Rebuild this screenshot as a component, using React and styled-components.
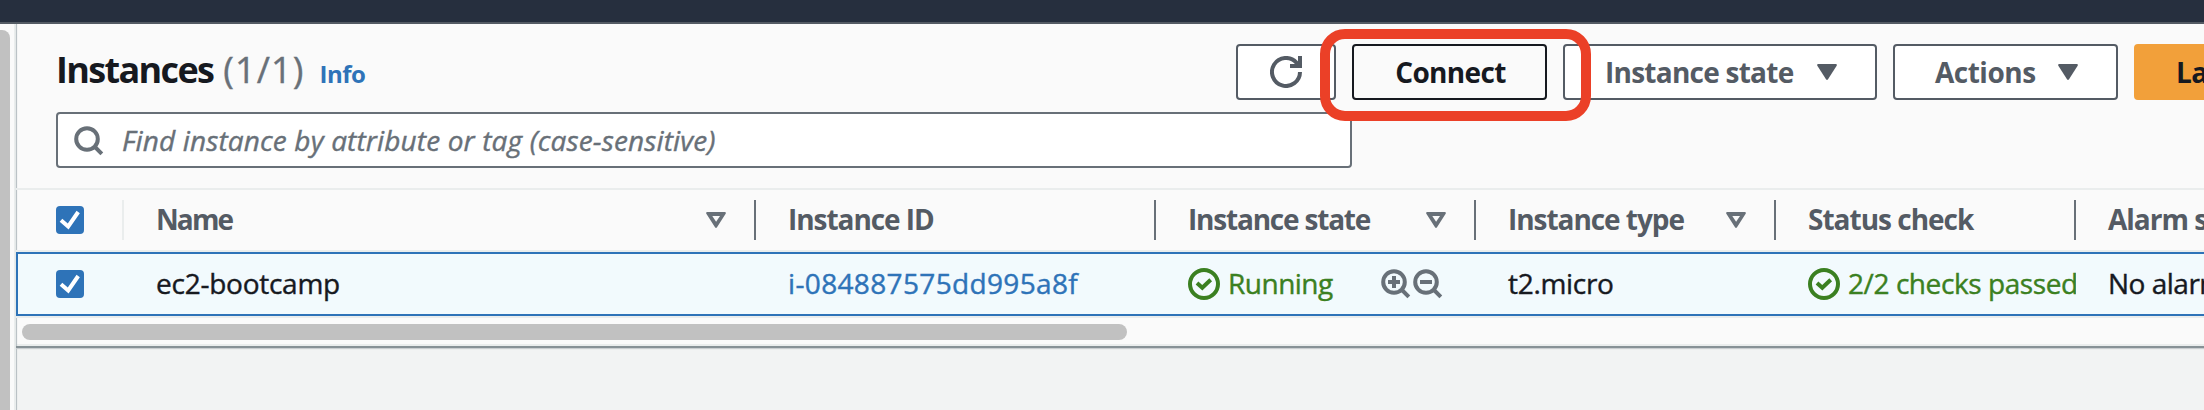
import React from "react";
import styled, { createGlobalStyle } from "styled-components";

const color = {
  ink: "#16191f",
  slate: "#545b64",
  muted: "#687078",
  link: "#2e73b8",
  ok: "#3b8021",
  line: "#eaeded",
  surface: "#fafafa",
};

const GlobalStyle = createGlobalStyle`
  *, *::before, *::after { box-sizing: border-box; }
  body {
    margin: 0;
    overflow: hidden;
    background: #f2f3f3;
    color: ${color.ink};
    font: 400 28px/36px "Open Sans", "Noto Sans", sans-serif;
  }
  svg { display: block; flex: none; }
`;

const Page = styled.div`
  display: flex;
  flex-direction: column;
  width: 2204px;
  height: 410px;
  overflow: hidden;
`;

const TopBar = styled.header`
  flex: none;
  height: 24px;
  background: #262f3e;
  border-bottom: 2px solid ${color.slate};
`;

const Body = styled.div`
  display: flex;
  flex: 1;
  min-height: 0;
`;

const Sidebar = styled.aside`
  flex: none;
  width: 16px;
  padding-top: 6px;
  background: ${color.surface};
  border-right: 2px solid ${color.line};
`;

const SidebarThumb = styled.div`
  width: 10px;
  height: 100%;
  border-radius: 0 8px 0 0;
  background: #c1c1c1;
`;

const Main = styled.main`
  flex: 1;
  min-width: 0;
  box-shadow: inset 2px 0 1px -1px #b4bcc0;
`;

const Panel = styled.section`
  position: relative;
  display: flex;
  flex-direction: column;
  height: 324px;
  background: ${color.surface};
  border-bottom: 2px solid #879196;
  box-shadow: 0 1px 1px #c9cdd0, inset 2px 0 1px -1px #b4bcc0, inset 0 -2px 0 ${color.line};
`;

const PanelHeader = styled.div`
  flex: none;
  display: flex;
  justify-content: space-between;
  height: 88px;
  padding: 20px 0 0 40px;
`;

const Heading = styled.h1`
  display: flex;
  align-items: baseline;
  margin: 0;
  font-size: 36px;
  line-height: 52px;
  font-weight: 700;
  letter-spacing: -1.65px;
`;

const Counter = styled.span`
  margin-left: 10px;
  font-weight: 400;
  letter-spacing: 1.1px;
  color: ${color.muted};
  -webkit-text-stroke: 0.4px currentColor;
`;

const InfoLink = styled.a`
  margin-left: 15px;
  font-size: 24px;
  letter-spacing: -0.5px;
  color: ${color.link};
`;

const Actions = styled.div`
  display: flex;
  gap: 16px;
  width: 968px;
  overflow: hidden;
`;

const Button = styled.button`
  flex: none;
  display: flex;
  align-items: center;
  justify-content: ${(p) => (p.$center ? "center" : "space-between")};
  width: ${(p) => p.$width}px;
  height: 56px;
  padding: 0 38px 0 40px;
  border: 2px solid ${(p) => (p.$hovered ? color.ink : color.slate)};
  border-radius: 4px;
  background: ${(p) => (p.$hovered ? color.surface : "#fff")};
  color: ${(p) => (p.$hovered ? color.ink : color.slate)};
  font: 700 28px/36px "Open Sans", "Noto Sans", sans-serif;
  letter-spacing: ${(p) => p.$tracking || -0.5}px;
  white-space: nowrap;
`;

const IconButton = styled(Button)`
  padding: 0;
`;

const PrimaryButton = styled(Button)`
  border-color: #f2a03a;
  background: #f2a03a;
  color: ${color.ink};
`;

const SearchRow = styled.div`
  flex: none;
  height: 76px;
  padding-left: 40px;
`;

const SearchField = styled.div`
  display: flex;
  align-items: center;
  gap: 17px;
  width: 1296px;
  height: 56px;
  padding: 2px 0 0 15px;
  border: 2px solid ${color.muted};
  border-radius: 4px;
  background: #fff;
  color: ${color.muted};
`;

const Placeholder = styled.span`
  margin-bottom: 2px;
  font-style: italic;
  letter-spacing: 0.14px;
  -webkit-text-stroke: 0.4px currentColor;
`;

const TableRow = styled.div`
  flex: none;
  display: grid;
  grid-template-columns: 108px 632px 400px 320px 300px 300px 300px;
  overflow: hidden;
`;

const HeaderRow = styled(TableRow)`
  height: 64px;
  padding-bottom: 2px;
  border-top: 2px solid ${color.line};
  border-bottom: 2px solid ${color.line};
`;

const BodyRow = styled(TableRow)`
  position: relative;
  height: 64px;
  border: 2px solid ${color.link};
  border-right: 0;
  background: #f2fafd;
  grid-template-columns: 106px 632px 400px 320px 300px 300px 300px;
`;

const HeaderCell = styled.div`
  display: flex;
  align-items: center;
  justify-content: space-between;
  height: 40px;
  margin-top: 10px;
  padding: 0 28px 0 32px;
  border-right: 2px solid ${(p) => (p.$faint ? color.line : color.muted)};
  color: ${color.slate};
  font-weight: 700;
  letter-spacing: ${(p) => p.$tracking || -1}px;
  white-space: nowrap;
`;

const CheckCell = styled(HeaderCell)`
  padding: 0 0 0 40px;
`;

const Cell = styled.div`
  display: flex;
  align-items: center;
  gap: ${(p) => p.$gap || 0}px;
  min-width: 0;
  padding: 0 0 0 ${(p) => p.$inset || 32}px;
  overflow: hidden;
  color: ${(p) => p.$color || color.ink};
  letter-spacing: ${(p) => p.$tracking || 0}px;
  white-space: nowrap;
  -webkit-text-stroke: 0.4px currentColor;
`;

const Label = styled.span`
  margin-bottom: 2px;
`;

const FilterTools = styled.span`
  display: flex;
  margin: 0 32px 0 auto;
  color: ${color.muted};
`;

const Checkbox = styled.span`
  width: 28px;
  height: 28px;
  border-radius: 4px;
  background: ${color.link};
`;

const ScrollTrack = styled.div`
  flex: none;
  height: 28px;
  padding: 8px 0 0 6px;
  border-top: 2px solid ${color.line};
`;

const ScrollThumb = styled.div`
  width: 1105px;
  height: 16px;
  margin-top: -2px;
  border-radius: 8px;
  background: #c1c1c1;
`;

const Highlight = styled.div`
  position: absolute;
  left: 1304px;
  top: 5px;
  width: 271px;
  height: 92px;
  border: 10px solid #eb4027;
  border-radius: 25px;
`;

const stroke = { fill: "none", stroke: "currentColor", strokeWidth: 4 };

const CheckboxChecked = () => (
  <Checkbox>
    <svg width="28" height="28" viewBox="0 0 28 28" fill="none" stroke="#fff" strokeWidth="4">
      <path d="M5 14.3L12.2 20.5L22.2 6" />
    </svg>
  </Checkbox>
);

const Magnifier = ({ sign }) => (
  <svg width="32" height="32" viewBox="0 0 32 32" {...stroke}>
    <circle cx="14" cy="14" r="10.8" />
    <path d="M21.5 21.5L28.8 28.8" />
    {sign && <path d="M8 14H20" />}
    {sign === "plus" && <path d="M14 8V20" />}
  </svg>
);

const SuccessIcon = () => (
  <svg width="32" height="32" viewBox="0 0 32 32" {...stroke}>
    <circle cx="16" cy="16" r="14" />
    <path d="M9 15L14.3 19.8L22.7 11.8" />
  </svg>
);

const RefreshIcon = () => (
  <svg width="32" height="32" viewBox="0 0 32 32" {...stroke}>
    <path d="M30 16A14 14 0 1 1 26.4 6.6L29 10" />
    <path d="M30 0V10H20" />
  </svg>
);

const Caret = () => (
  <svg width="20" height="16" viewBox="0 0 20 16" fill="currentColor">
    <path d="M1.2 0H18.8Q20.5.3 19.5 2L11 15.2Q10 16.6 9 15.2L.5 2Q-.5.3 1.2 0Z" />
  </svg>
);

const SortCaret = () => (
  <svg width="20" height="16" viewBox="0 0 20 16" fill={color.muted} fillRule="evenodd">
    <path d="M1.2 0H18.8Q20.5.3 19.5 2L11 15.2Q10 16.6 9 15.2L.5 2Q-.5.3 1.2 0ZM6.3 4L10.1 9.8L14 4Z" />
  </svg>
);

const columns = [
  { title: "Name", sortable: true, tracking: -1.9 },
  { title: "Instance ID", tracking: -1.05 },
  { title: "Instance state", sortable: true, tracking: -1.2 },
  { title: "Instance type", sortable: true, tracking: -1.05 },
  { title: "Status check" },
  { title: "Alarm status" },
];

export default function App() {
  return (
    <Page>
      <GlobalStyle />
      <TopBar />
      <Body>
        <Sidebar>
          <SidebarThumb />
        </Sidebar>
        <Main>
          <Panel>
            <PanelHeader>
              <Heading>
                Instances <Counter>(1/1)</Counter>
                <InfoLink>Info</InfoLink>
              </Heading>
              <Actions>
                <IconButton $width={100} $center>
                  <RefreshIcon />
                </IconButton>
                <Button $width={195} $center $hovered $tracking={-0.65}>
                  Connect
                </Button>
                <Button $width={314} $tracking={-0.75}>
                  Instance state <Caret />
                </Button>
                <Button $width={225}>
                  Actions <Caret />
                </Button>
                <PrimaryButton $width={282}>Launch instances</PrimaryButton>
              </Actions>
            </PanelHeader>
            <SearchRow>
              <SearchField>
                <Magnifier />
                <Placeholder>Find instance by attribute or tag (case-sensitive)</Placeholder>
              </SearchField>
            </SearchRow>
            <HeaderRow>
              <CheckCell $faint>
                <CheckboxChecked />
              </CheckCell>
              {columns.map((c) => (
                <HeaderCell key={c.title} $tracking={c.tracking}>
                  <Label>{c.title}</Label>
                  {c.sortable && <SortCaret />}
                </HeaderCell>
              ))}
            </HeaderRow>
            <BodyRow>
              <Cell $inset={38}>
                <CheckboxChecked />
              </Cell>
              <Cell $tracking={-0.25}>
                <Label>ec2-bootcamp</Label>
              </Cell>
              <Cell $color={color.link} $tracking={0.35}>
                <Label>i-084887575dd995a8f</Label>
              </Cell>
              <Cell $color={color.ok} $inset={32} $gap={8} $tracking={-0.5}>
                <SuccessIcon />
                <Label>Running</Label>
                <FilterTools>
                  <Magnifier sign="plus" />
                  <Magnifier sign="minus" />
                </FilterTools>
              </Cell>
              <Cell $tracking={-0.3}>
                <Label>t2.micro</Label>
              </Cell>
              <Cell $color={color.ok} $inset={32} $gap={8} $tracking={-0.42}>
                <SuccessIcon />
                <Label>2/2 checks passed</Label>
              </Cell>
              <Cell $tracking={-0.5}>
                <Label>No alarms</Label>
              </Cell>
            </BodyRow>
            <ScrollTrack>
              <ScrollThumb />
            </ScrollTrack>
            <Highlight />
          </Panel>
        </Main>
      </Body>
    </Page>
  );
}
